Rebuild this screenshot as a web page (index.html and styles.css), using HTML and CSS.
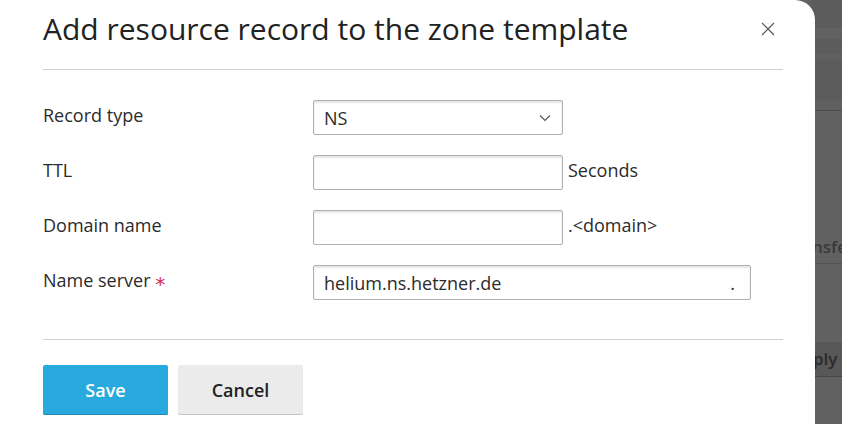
FILE: index.html
```html
<!DOCTYPE html>
<html lang="en">
<head>
<meta charset="utf-8">
<title>Add resource record to the zone template</title>
<link rel="stylesheet" href="styles.css">
</head>
<body>
<div class="page" aria-hidden="true">
  <div class="page-bar"></div>
  <div class="page-heading">nsfe</div>
  <div class="page-space"></div>
  <div class="page-toolbar">ply D</div>
</div>
<main class="dialog" role="dialog" aria-labelledby="dialog-title">
  <header class="dialog-header">
    <h1 id="dialog-title">Add resource record to the zone template</h1>
    <button class="close" type="button" aria-label="Close">
      <svg width="14" height="14" viewBox="0 0 14 14" fill="none" stroke="currentColor" stroke-width="1.2"><path d="M1 1L13 13M13 1L1 13"/></svg>
    </button>
  </header>
  <form>
    <div class="fields">
      <div class="row">
        <label for="type">Record type</label>
        <div class="control">
          <div class="select-box">
            <select class="field" id="type"><option>NS</option></select>
            <svg class="chevron" width="12" height="8" viewBox="0 0 12 8" fill="none" stroke="currentColor" stroke-width="1.2"><path d="M1 1.5L6 6.5L11 1.5"/></svg>
          </div>
        </div>
      </div>
      <div class="row">
        <label for="ttl">TTL</label>
        <div class="control"><input class="field" id="ttl" type="text"><span class="suffix">Seconds</span></div>
      </div>
      <div class="row">
        <label for="domain">Domain name</label>
        <div class="control"><input class="field" id="domain" type="text"><span class="suffix">.&lt;domain&gt;</span></div>
      </div>
      <div class="row">
        <label for="server">Name server <span class="required">*</span></label>
        <div class="control"><div class="field field-group"><input id="server" type="text" value="helium.ns.hetzner.de" required><span>.</span></div></div>
      </div>
    </div>
    <footer class="actions">
      <button class="button primary" type="submit">Save</button>
      <button class="button" type="button">Cancel</button>
    </footer>
  </form>
</main>
</body>
</html>
```
FILE: styles.css
```css
* {
  box-sizing: border-box;
}

body {
  margin: 0;
  min-height: 100vh;
  background: #616161;
  color: #2b2b2b;
  font: 18px/24px "Open Sans", sans-serif;
  overflow: hidden;
}

input,
select,
button {
  font: inherit;
  color: inherit;
}

/* Dimmed page behind the dialog */
.page {
  position: absolute;
  inset: 0 0 0 auto;
  width: 30px;
  overflow: hidden;
  color: #393939;
  font-size: 17px;
  font-weight: 600;
  white-space: nowrap;
}

.page-bar {
  height: 111px;
  border-bottom: 1px solid #4c4c4c;
  background: linear-gradient(#5c5c5c 28px, #616161 28px 39px, #5c5c5c 39px 54px, #606060 54px 60px, #5c5c5c 60px 100px, #606060 100px);
}

.page-heading {
  margin-top: 124px;
  height: 29px;
  border-bottom: 1px solid #545454;
}

.page-space {
  height: 78px;
}

.page-toolbar {
  height: 35px;
  padding: 5px 0 0 1px;
  border-bottom: 1px solid #454545;
  background: #585858;
  color: #2b2b2b;
}

.dialog {
  position: relative;
  min-height: 100vh;
  margin-right: 27px;
  padding: 0 32px 0 43px;
  background: #fff;
  border-top-right-radius: 20px;
}

.dialog-header {
  display: flex;
  align-items: center;
  justify-content: space-between;
  padding-bottom: 11px;
  height: 70px;
  border-bottom: 1px solid #d0d0d0;
}

h1 {
  margin: 0;
  color: #222;
  font-size: 30px;
  font-weight: 400;
  line-height: 40px;
}

.close {
  display: flex;
  padding: 8px;
  border: 0;
  background: none;
  color: #555;
}

.fields {
  display: grid;
  gap: 20px;
  padding: 30px 0 39px;
}

.row {
  display: grid;
  grid-template-columns: 270px 1fr;
}

label,
.suffix {
  padding-top: 3px;
}

.required {
  color: #d02c52;
  font-family: "DejaVu Sans", sans-serif;
  font-size: 20px;
  line-height: 16px;
  vertical-align: -4px;
}

.control {
  display: flex;
  gap: 5px;
}

.select-box {
  position: relative;
}

.field {
  width: 250px;
  height: 35px;
  padding: 0 10px;
  border: 1px solid #b0b0b0;
  border-radius: 2px;
  background: #fff;
  box-shadow: inset 0 2px 2px #e6e6e6;
}

select.field {
  display: block;
  appearance: none;
}

.chevron {
  position: absolute;
  top: 14px;
  right: 12px;
  color: #555;
  pointer-events: none;
}

.field-group {
  display: flex;
  align-items: center;
  width: 438px;
  padding-right: 15px;
}

.field-group input {
  flex: 1;
  min-width: 0;
  padding: 0;
  border: 0;
  outline: 0;
  background: none;
}

.actions {
  display: flex;
  gap: 10px;
  padding-top: 25px;
  border-top: 1px solid #d0d0d0;
}

.button {
  width: 125px;
  height: 50px;
  padding: 0;
  border: 0;
  border-radius: 2px;
  background: #ebebeb;
  box-shadow: inset 0 -1px #c4c4c4;
  color: #222;
  font-weight: 600;
}

.primary {
  background: #28aade;
  box-shadow: inset 0 -1px #2187b2;
  color: #fff;
}
```
